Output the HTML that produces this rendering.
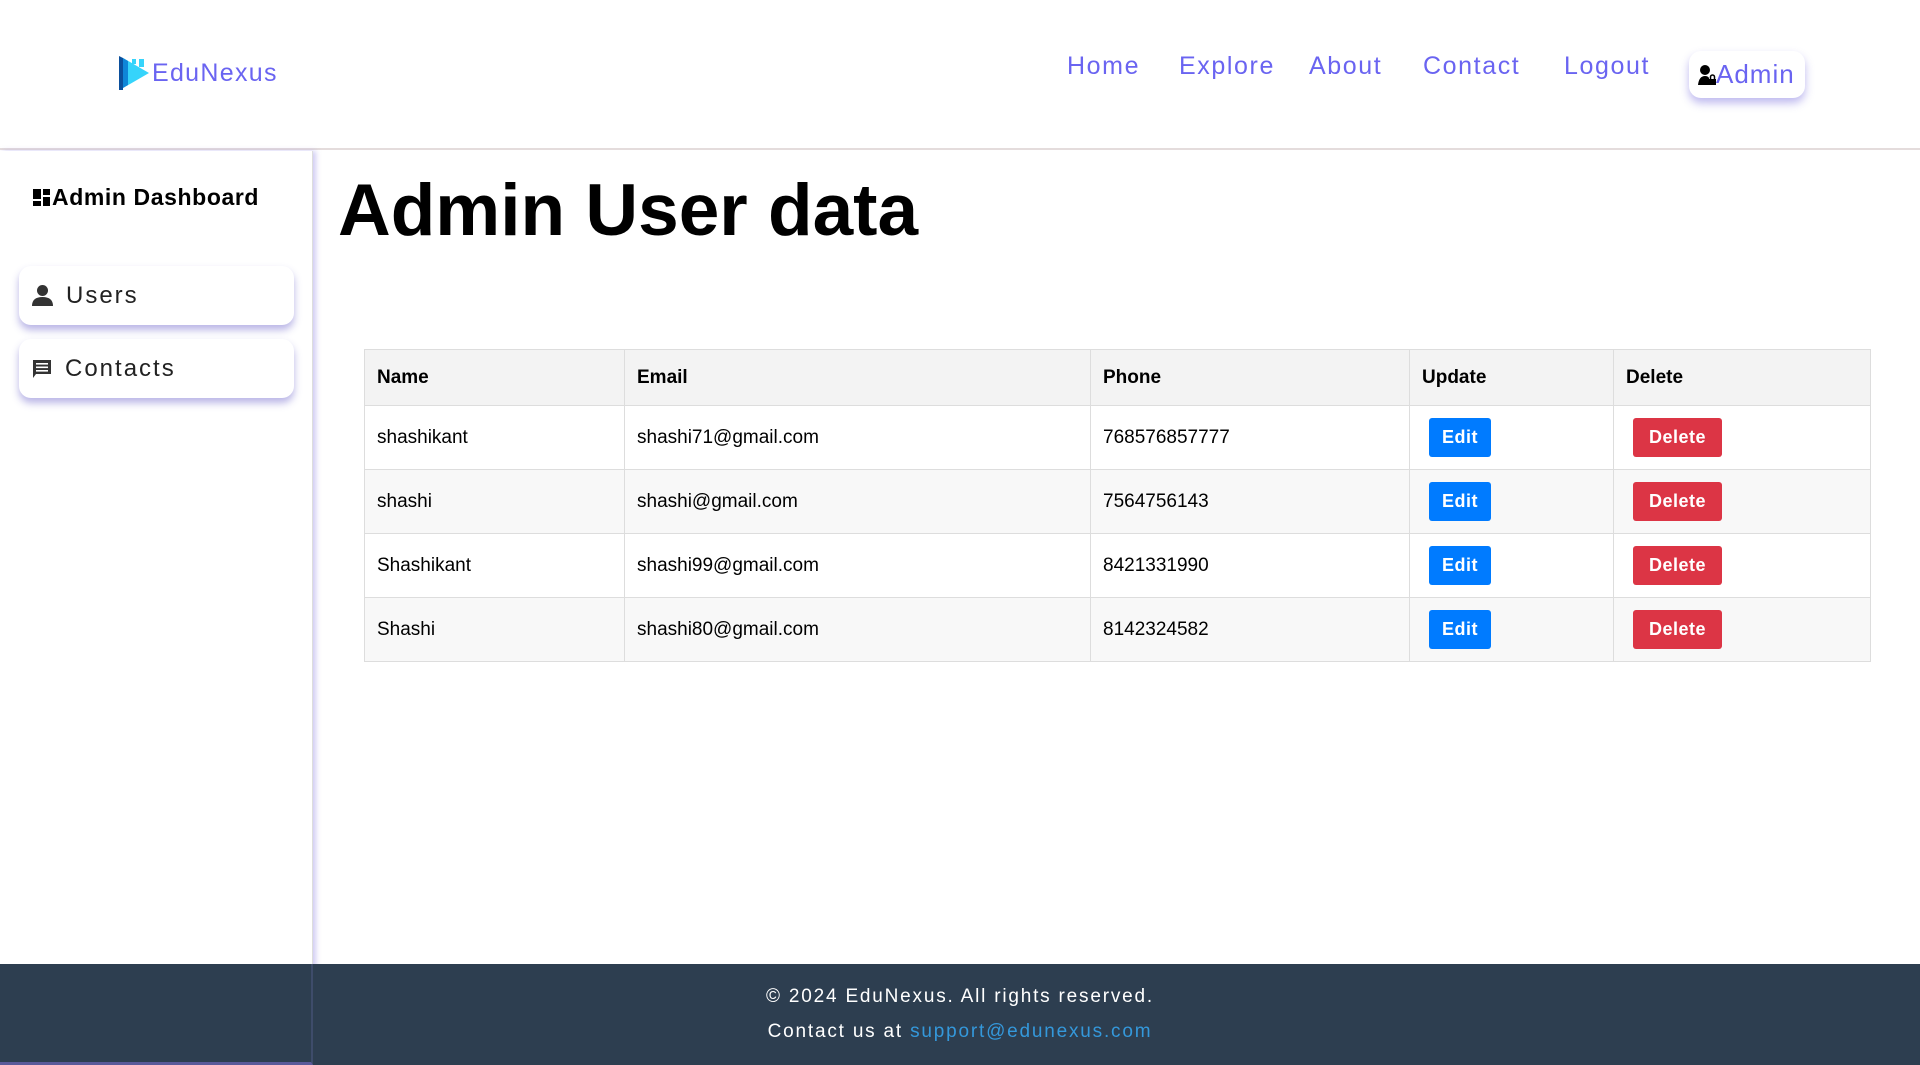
<!DOCTYPE html>
<html><head><meta charset="utf-8">
<style>
*{box-sizing:border-box;margin:0;padding:0}
html,body{width:1920px;height:1065px;overflow:hidden;background:#fff;font-family:"Liberation Sans",sans-serif;color:#000}
.header{position:absolute;left:0;top:0;width:1920px;height:150px;border-bottom:2px solid #e4dcdc;background:#fff}
.logo{position:absolute;left:119px;top:56px;display:flex;align-items:center}
.logo span{font-size:25px;color:#6a64f1;letter-spacing:1.3px;margin-left:3px}
.nav{position:absolute;top:52px;font-size:25px;color:#6a64f1;letter-spacing:1.6px}
.adminbtn{position:absolute;left:1689px;top:51px;width:116px;height:47px;border-radius:12px;background:#fff;box-shadow:0 5px 9px rgba(110,100,220,.45);display:flex;align-items:center;padding-left:9px;font-size:26px;color:#6a64f1;letter-spacing:1px}
.sidebar{position:absolute;left:0;top:151px;width:313px;height:914px;background:#fff;box-shadow:3px 0 5px rgba(120,110,220,.35);border-right:1px solid #ddd}
.dash{position:absolute;left:33px;top:33px;font-size:23px;font-weight:bold;display:flex;align-items:center;letter-spacing:.6px}
.sbtn{position:absolute;left:19px;width:275px;height:59px;border-radius:12px;background:#fff;box-shadow:0 5px 8px rgba(100,90,200,.45);display:flex;align-items:center;padding-left:13px;font-size:24px;color:#222;letter-spacing:2px}
.sbtn svg{margin-right:13px}
h1{position:absolute;left:338px;top:169px;font-size:73px;font-weight:bold}
table{position:absolute;left:364px;top:349px;width:1507px;border-collapse:collapse;font-size:19px}
td,th{border:1px solid #ddd;text-align:left;padding:0 0 0 12px;height:64px}
th{height:56px;background:#f3f3f3;font-weight:bold}
tr:nth-child(odd) td{background:#f8f8f8}
.edit{display:inline-block;background:#007bff;color:#fff;font-size:18px;font-weight:bold;width:62px;height:39px;line-height:39px;text-align:center;border-radius:3px;margin-left:7px;letter-spacing:.5px}
.del{display:inline-block;background:#dc3545;color:#fff;font-size:18px;font-weight:bold;width:89px;height:39px;line-height:39px;text-align:center;border-radius:3px;margin-left:7px;letter-spacing:.5px}
.footer{position:absolute;left:0;top:964px;width:1920px;height:101px;background:#2d3e50;color:#fff;text-align:center;font-size:19px;letter-spacing:1.8px}
.footer .sb{position:absolute;left:0;top:0;width:313px;height:101px;border-right:2px solid #3e4c6a;border-bottom:3px solid #5a5a9a}
</style></head><body>
<div class="header">
 <div class="logo">
  <svg width="30" height="34" viewBox="0 0 30 34"><polygon points="0,0 4,2 4,34 0,34" fill="#0b4f9c"/><polygon points="4,2 30,17 4,32" fill="#36d4fb"/><polygon points="4,2 9,5 9,29 4,32" fill="#0f86d8"/><rect x="20" y="3" width="5" height="8" fill="#36d4fb"/><rect x="13" y="3" width="4" height="5" fill="#36d4fb"/></svg>
  <span>EduNexus</span>
 </div>
 <div class="nav" style="left:1067px">Home</div>
 <div class="nav" style="left:1179px">Explore</div>
 <div class="nav" style="left:1309px">About</div>
 <div class="nav" style="left:1423px">Contact</div>
 <div class="nav" style="left:1564px">Logout</div>
</div>
<div class="adminbtn"><svg width="18" height="22" viewBox="0 0 18 22"><circle cx="7" cy="6" r="5" fill="#000"/><path d="M0 21 Q1 12 7 12 Q10 12 11 14 L11 21Z" fill="#000"/><rect x="11" y="15" width="7" height="6" fill="#000"/><path d="M12.5 15 V13 A2 2 0 0 1 16.5 13 V15" stroke="#000" stroke-width="1.5" fill="none"/></svg>Admin</div>
<div class="sidebar">
 <div class="dash"><svg width="17" height="17" viewBox="0 0 17 17" style="margin-right:2px"><rect x="0" y="0" width="8" height="10" fill="#000"/><rect x="10" y="0" width="7" height="6" fill="#000"/><rect x="0" y="12" width="8" height="5" fill="#000"/><rect x="10" y="8" width="7" height="9" fill="#000"/></svg>Admin Dashboard</div>
 <div class="sbtn" style="top:115px"><svg width="21" height="21" viewBox="0 0 21 21"><circle cx="10.5" cy="5.5" r="5.5" fill="#333"/><path d="M0 21 Q0 12 10.5 12 Q21 12 21 21Z" fill="#333"/></svg>Users</div>
 <div class="sbtn" style="top:188px"><svg width="20" height="20" viewBox="0 0 20 20"><path d="M1 1 H19 V15 H4 L1 19Z" fill="#333"/><rect x="4" y="4" width="12" height="1.6" fill="#fff"/><rect x="4" y="7.5" width="12" height="1.6" fill="#fff"/><rect x="4" y="11" width="12" height="1.6" fill="#fff"/></svg>Contacts</div>
</div>
<h1>Admin User data</h1>
<table>
<tr><th style="width:260px">Name</th><th style="width:466px">Email</th><th style="width:319px">Phone</th><th style="width:204px">Update</th><th>Delete</th></tr>
<tr><td>shashikant</td><td>shashi71@gmail.com</td><td>768576857777</td><td><span class="edit">Edit</span></td><td><span class="del">Delete</span></td></tr>
<tr><td>shashi</td><td>shashi@gmail.com</td><td>7564756143</td><td><span class="edit">Edit</span></td><td><span class="del">Delete</span></td></tr>
<tr><td>Shashikant</td><td>shashi99@gmail.com</td><td>8421331990</td><td><span class="edit">Edit</span></td><td><span class="del">Delete</span></td></tr>
<tr><td>Shashi</td><td>shashi80@gmail.com</td><td>8142324582</td><td><span class="edit">Edit</span></td><td><span class="del">Delete</span></td></tr>
</table>
<div class="footer">
 <div class="sb"></div>
 <div style="position:absolute;left:0;width:1920px;top:22px">© 2024 EduNexus. All rights reserved.</div>
 <div style="position:absolute;left:0;width:1920px;top:57px">Contact us at <span style="color:#3498db">support@edunexus.com</span></div>
</div>
</body></html>
